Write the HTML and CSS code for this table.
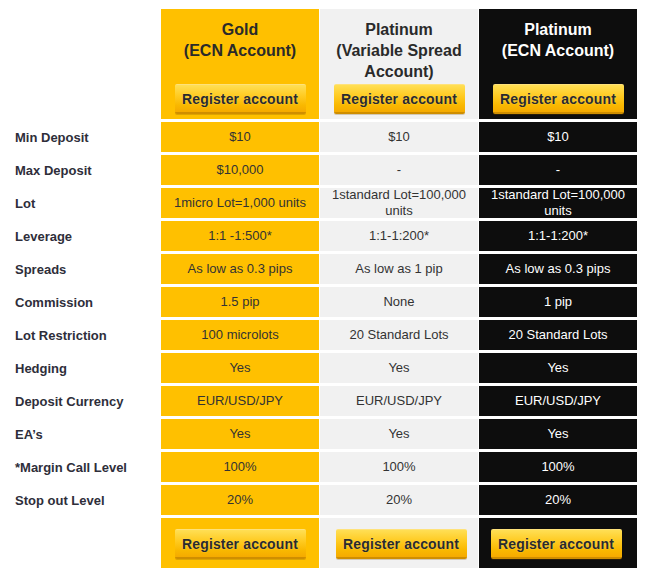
FILE: index.html
```html
<!DOCTYPE html>
<html>
<head>
<meta charset="utf-8">
<link rel="stylesheet" href="styles.css">
</head>
<body>
<div class="compare">
  <div class="label head-label"></div>
  <div class="head gold"><div class="title">Gold<br>(ECN Account)</div><a class="btn">Register account</a></div>
  <div class="head grey"><div class="title">Platinum<br>(Variable Spread<br>Account)</div><a class="btn">Register account</a></div>
  <div class="head black"><div class="title">Platinum<br>(ECN Account)</div><a class="btn">Register account</a></div>

  <div class="label">Min Deposit</div>
  <div class="cell gold">$10</div><div class="cell grey">$10</div><div class="cell black">$10</div>

  <div class="label">Max Deposit</div>
  <div class="cell gold">$10,000</div><div class="cell grey">-</div><div class="cell black">-</div>

  <div class="label">Lot</div>
  <div class="cell gold">1micro Lot=1,000 units</div><div class="cell grey">1standard Lot=100,000 units</div><div class="cell black">1standard Lot=100,000 units</div>

  <div class="label">Leverage</div>
  <div class="cell gold">1:1 -1:500*</div><div class="cell grey">1:1-1:200*</div><div class="cell black">1:1-1:200*</div>

  <div class="label">Spreads</div>
  <div class="cell gold">As low as 0.3 pips</div><div class="cell grey">As low as 1 pip</div><div class="cell black">As low as 0.3 pips</div>

  <div class="label">Commission</div>
  <div class="cell gold">1.5 pip</div><div class="cell grey">None</div><div class="cell black">1 pip</div>

  <div class="label">Lot Restriction</div>
  <div class="cell gold">100 microlots</div><div class="cell grey">20 Standard Lots</div><div class="cell black">20 Standard Lots</div>

  <div class="label">Hedging</div>
  <div class="cell gold">Yes</div><div class="cell grey">Yes</div><div class="cell black">Yes</div>

  <div class="label">Deposit Currency</div>
  <div class="cell gold">EUR/USD/JPY</div><div class="cell grey">EUR/USD/JPY</div><div class="cell black">EUR/USD/JPY</div>

  <div class="label">EA’s</div>
  <div class="cell gold">Yes</div><div class="cell grey">Yes</div><div class="cell black">Yes</div>

  <div class="label">*Margin Call Level</div>
  <div class="cell gold">100%</div><div class="cell grey">100%</div><div class="cell black">100%</div>

  <div class="label">Stop out Level</div>
  <div class="cell gold">20%</div><div class="cell grey">20%</div><div class="cell black">20%</div>

  <div class="label"></div>
  <div class="foot gold"><a class="btn">Register account</a></div>
  <div class="foot grey shift-right"><a class="btn">Register account</a></div>
  <div class="foot black shift-left"><a class="btn">Register account</a></div>
</div>
</body>
</html>
```
FILE: styles.css
```css
html, body {
  margin: 0;
  padding: 0;
  background: #fff;
}
body {
  font-family: "Liberation Sans", Arial, sans-serif;
  color: #333;
}
.compare {
  display: grid;
  grid-template-columns: 160px 158px 158px 158px;
  grid-template-rows: 110px repeat(12, 30px) 50px;
  column-gap: 1px;
  row-gap: 3px;
  padding-top: 9px;
}
.gold { background: #ffc000; }
.grey { background: #f1f1f1; }
.black { background: #0d0d0d; color: #fff; }

.label {
  display: flex;
  align-items: center;
  padding-left: 15px;
  font-size: 13px;
  font-weight: bold;
  color: #2e2e3a;
}
.head {
  display: flex;
  flex-direction: column;
  align-items: center;
  justify-content: space-between;
  padding: 10px 0 5px;
  box-sizing: border-box;
}
.title {
  font-size: 16px;
  font-weight: bold;
  line-height: 21px;
  text-align: center;
  color: #2a2a2a;
}
.black .title { color: #fff; }
.cell {
  display: flex;
  align-items: center;
  justify-content: center;
  text-align: center;
  font-size: 13px;
  line-height: 16px;
  padding: 0 8px;
  overflow: visible;
}
.gold.cell, .grey.cell { color: #333; }
.black.cell { color: #fff; }
.foot {
  display: flex;
  align-items: center;
  justify-content: center;
  padding-top: 2px;
  box-sizing: border-box;
}
.shift-right { padding-left: 4px; }
.shift-left { padding-right: 4px; }
.btn {
  display: flex;
  align-items: center;
  justify-content: center;
  width: 131px;
  height: 30px;
  box-sizing: border-box;
  border-radius: 2px;
  background: linear-gradient(to bottom, #ffdf55 0%, #ffcb22 40%, #f9b800 75%, #f5aa00 100%);
  border-top: 1px solid #ffe27a;
  border-bottom: 2px solid #cf8e00;
  box-shadow: 0 1px 0 rgba(120, 80, 0, 0.25);
  font-size: 14px;
  font-weight: bold;
  letter-spacing: 0.15px;
  color: #2a2a2a;
  text-shadow: 0 0 1px #ffe680;
  cursor: pointer;
}
```
